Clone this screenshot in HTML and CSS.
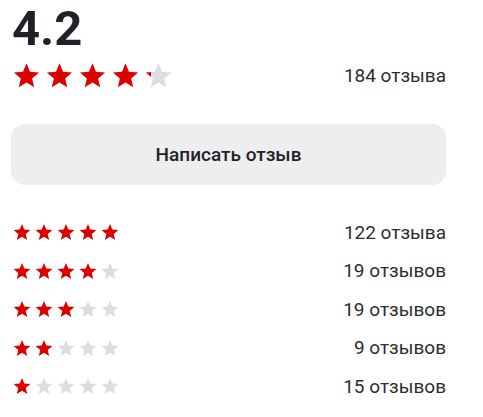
FILE: index.html
```html
<!DOCTYPE html>
<html lang="ru">
<head>
    <meta charset="UTF-8">
    <meta name="viewport" content="width=device-width, initial-scale=1.0">
    <title>Отзывы</title>
    <link rel="stylesheet" href="styles.css">
</head>
<body>

    <svg width="0" height="0" class="defs">
        <defs>
            <symbol id="star" viewBox="0 0 24 24">
                <polygon points="12,1.2 15.1,8.6 23.2,9.3 17,14.6 18.9,22.5 12,18.3 5.1,22.5 7,14.6 0.8,9.3 8.9,8.6"/>
            </symbol>
            <linearGradient id="part">
                <stop offset="20%" stop-color="#dc0000"/>
                <stop offset="20%" stop-color="#dcdde0"/>
            </linearGradient>
        </defs>
    </svg>

    <div class="reviews">
        <div class="score">4.2</div>

        <div class="summary">
            <div class="stars big">
                <svg class="on"><use href="#star"/></svg>
                <svg class="on"><use href="#star"/></svg>
                <svg class="on"><use href="#star"/></svg>
                <svg class="on"><use href="#star"/></svg>
                <svg class="part"><use href="#star"/></svg>
            </div>
            <span class="count">184 отзыва</span>
        </div>

        <button class="write">Написать отзыв</button>

        <div class="rows">
            <div class="row">
                <div class="stars small">
                    <svg class="on"><use href="#star"/></svg>
                    <svg class="on"><use href="#star"/></svg>
                    <svg class="on"><use href="#star"/></svg>
                    <svg class="on"><use href="#star"/></svg>
                    <svg class="on"><use href="#star"/></svg>
                </div>
                <span class="count">122 отзыва</span>
            </div>
            <div class="row">
                <div class="stars small">
                    <svg class="on"><use href="#star"/></svg>
                    <svg class="on"><use href="#star"/></svg>
                    <svg class="on"><use href="#star"/></svg>
                    <svg class="on"><use href="#star"/></svg>
                    <svg class="off"><use href="#star"/></svg>
                </div>
                <span class="count">19 отзывов</span>
            </div>
            <div class="row">
                <div class="stars small">
                    <svg class="on"><use href="#star"/></svg>
                    <svg class="on"><use href="#star"/></svg>
                    <svg class="on"><use href="#star"/></svg>
                    <svg class="off"><use href="#star"/></svg>
                    <svg class="off"><use href="#star"/></svg>
                </div>
                <span class="count">19 отзывов</span>
            </div>
            <div class="row">
                <div class="stars small">
                    <svg class="on"><use href="#star"/></svg>
                    <svg class="on"><use href="#star"/></svg>
                    <svg class="off"><use href="#star"/></svg>
                    <svg class="off"><use href="#star"/></svg>
                    <svg class="off"><use href="#star"/></svg>
                </div>
                <span class="count">9 отзывов</span>
            </div>
            <div class="row">
                <div class="stars small">
                    <svg class="on"><use href="#star"/></svg>
                    <svg class="off"><use href="#star"/></svg>
                    <svg class="off"><use href="#star"/></svg>
                    <svg class="off"><use href="#star"/></svg>
                    <svg class="off"><use href="#star"/></svg>
                </div>
                <span class="count">15 отзывов</span>
            </div>
        </div>
    </div>

</body>
</html>
```

FILE: styles.css
```css
body {
    font-family: Roboto, "Noto Sans", Arial, sans-serif;
    margin: 0;
    background-color: #fff;
    color: #2b2d30;
}

.defs {
    position: absolute;
}

.reviews {
    width: 435px;
    padding: 4px 0 0 11px;
}

.score {
    font-size: 49px;
    font-weight: 700;
    line-height: 50px;
    color: #1f2327;
    padding-left: 1px;
}

.summary {
    display: flex;
    justify-content: space-between;
    align-items: center;
    height: 36px;
    margin-top: 3px;
}

.stars {
    display: flex;
}

.stars svg {
    display: block;
}

.stars.big {
    gap: 6px;
    padding-left: 2px;
}

.stars.big svg {
    width: 27px;
    height: 27px;
}

.stars.small {
    gap: 4px;
    padding-left: 2px;
}

.stars.small svg {
    width: 18px;
    height: 18px;
}

.on {
    fill: #dc0000;
}

.off {
    fill: #dcdde0;
}

.part {
    fill: url(#part);
}

.count {
    font-size: 19px;
    color: #2b2d30;
}

.write {
    display: block;
    width: 100%;
    height: 61px;
    margin-top: 31px;
    border: none;
    border-radius: 14px;
    background-color: #edeef0;
    font-family: inherit;
    font-size: 19px;
    font-weight: 500;
    color: #1f2327;
    cursor: pointer;
}

.rows {
    margin-top: 28px;
}

.row {
    display: flex;
    justify-content: space-between;
    align-items: center;
    height: 38.5px;
}
```
